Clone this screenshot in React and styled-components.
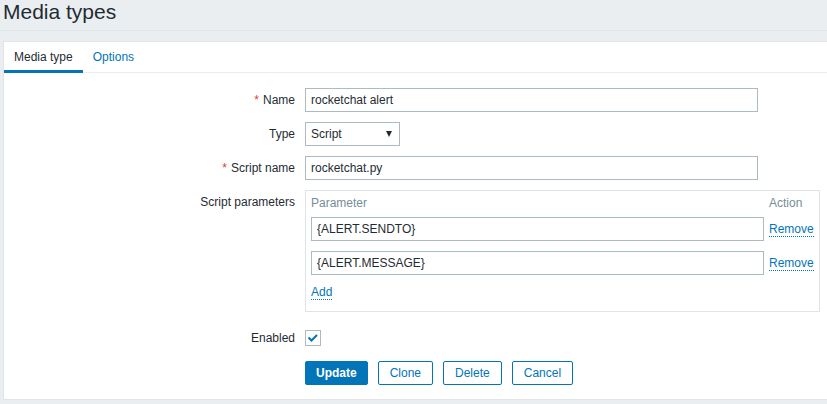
import React from "react";
import styled, { createGlobalStyle, css } from "styled-components";

const GlobalStyle = createGlobalStyle`
    html, body {
        margin: 0;
        padding: 0;
        background: #ebeef0;
        overflow: hidden;
    }
    body {
        font-family: "Liberation Sans", Arial, sans-serif;
        font-size: 12px;
        color: #1f2c33;
    }
`

const Header = styled.header`
    height: 30px;
    border-bottom: 1px solid #dfe4e7;
`

const Title = styled.h1`
    margin: 0;
    padding-left: 3px;
    font-size: 21px;
    font-weight: normal;
    line-height: 24px;
`

const Panel = styled.div`
    margin: 10px -10px 0 3px;
    background: #fff;
    border: 1px solid #dfe4e7;
    padding-bottom: 14px;
`

const TabBar = styled.div`
    display: flex;
    border-bottom: 1px solid #ebeef0;
`

const Tab = styled.div`
    height: 25px;
    padding: 3px 10px 0;
    line-height: 25px;
    margin-bottom: -1px;
    border-bottom: 3px solid transparent;
    color: #0275b8;
    ${props => props.active && css`
        color: #1f2c33;
        border-bottom-color: #0275b8;
    `}
`

const Form = styled.div`
    padding-top: 15px;
`

const Row = styled.div`
    display: flex;
    align-items: ${props => props.top ? "flex-start" : "center"};
    margin-top: ${props => props.gap}px;
`

const Label = styled.div`
    width: 291px;
    text-align: right;
    line-height: 24px;
    flex-shrink: 0;
`

const Star = styled.span`
    color: #e33734;
    margin-right: 4px;
`

const Field = styled.div`
    margin-left: 10px;
    display: flex;
    align-items: center;
`

const TextBox = styled.div`
    box-sizing: border-box;
    width: ${props => props.width || 453}px;
    height: 24px;
    border: 1px solid #acbbc2;
    padding: 0 5px;
    line-height: 22px;
    background: #fff;
    white-space: nowrap;
`

const Select = styled(TextBox)`
    display: flex;
    justify-content: space-between;
    align-items: center;
    padding-right: 7px;
`

const Caret = styled.span`
    width: 0;
    height: 0;
    border-left: 3.5px solid transparent;
    border-right: 3.5px solid transparent;
    border-top: 6px solid #1f2c33;
`

const ParamBox = styled.div`
    box-sizing: border-box;
    width: 515px;
    border: 1px solid #dfe4e7;
    padding: 4px 5px 11px 5px;
`

const ParamGrid = styled.div`
    display: grid;
    grid-template-columns: 453px auto;
    column-gap: 5px;
    row-gap: 10px;
    align-items: center;
`

const HeadCell = styled.div`
    color: #768d99;
    line-height: 17px;
    margin-bottom: -5px;
`

const Link = styled.span`
    display: inline-block;
    color: #0275b8;
    line-height: 14px;
    border-bottom: 1px dotted #0275b8;
    justify-self: start;
`

const CheckBox = styled.div`
    box-sizing: border-box;
    width: 16px;
    height: 16px;
    border: 1px solid #acbbc2;
    background: #fff;
    display: flex;
`

const Buttons = styled.div`
    display: flex;
    gap: 10px;
`

const Button = styled.div`
    height: 24px;
    box-sizing: border-box;
    padding: 0 11px;
    line-height: 22px;
    border: 1px solid #0275b8;
    border-radius: 2px;
    color: #0275b8;
    background: #fff;
    ${props => props.primary && css`
        padding: 0 10px;
        background: #0275b8;
        color: #fff;
        font-weight: bold;
    `}
`

const params = ["{ALERT.SENDTO}", "{ALERT.MESSAGE}"];

export default function App() {
    return (
        <>
            <GlobalStyle />
            <Header>
                <Title>Media types</Title>
            </Header>
            <Panel>
                <TabBar>
                    <Tab active>Media type</Tab>
                    <Tab>Options</Tab>
                </TabBar>
                <Form>
                    <Row gap={0}>
                        <Label><Star>*</Star>Name</Label>
                        <Field><TextBox>rocketchat alert</TextBox></Field>
                    </Row>
                    <Row gap={10}>
                        <Label>Type</Label>
                        <Field>
                            <Select width={95}>Script<Caret /></Select>
                        </Field>
                    </Row>
                    <Row gap={10}>
                        <Label><Star>*</Star>Script name</Label>
                        <Field><TextBox>rocketchat.py</TextBox></Field>
                    </Row>
                    <Row gap={10} top>
                        <Label>Script parameters</Label>
                        <Field>
                            <ParamBox>
                                <ParamGrid>
                                    <HeadCell>Parameter</HeadCell>
                                    <HeadCell>Action</HeadCell>
                                    {params.map(p => (
                                        <React.Fragment key={p}>
                                            <TextBox>{p}</TextBox>
                                            <Link>Remove</Link>
                                        </React.Fragment>
                                    ))}
                                    <Link>Add</Link>
                                </ParamGrid>
                            </ParamBox>
                        </Field>
                    </Row>
                    <Row gap={14}>
                        <Label>Enabled</Label>
                        <Field>
                            <CheckBox>
                                <svg width="14" height="14" viewBox="0 0 14 14">
                                    <polyline points="2.5,6.5 5.5,9.5 11,4" fill="none" stroke="#0275b8" strokeWidth="2" />
                                </svg>
                            </CheckBox>
                        </Field>
                    </Row>
                    <Row gap={11}>
                        <Label />
                        <Field>
                            <Buttons>
                                <Button primary>Update</Button>
                                <Button>Clone</Button>
                                <Button>Delete</Button>
                                <Button>Cancel</Button>
                            </Buttons>
                        </Field>
                    </Row>
                </Form>
            </Panel>
        </>
    );
}
